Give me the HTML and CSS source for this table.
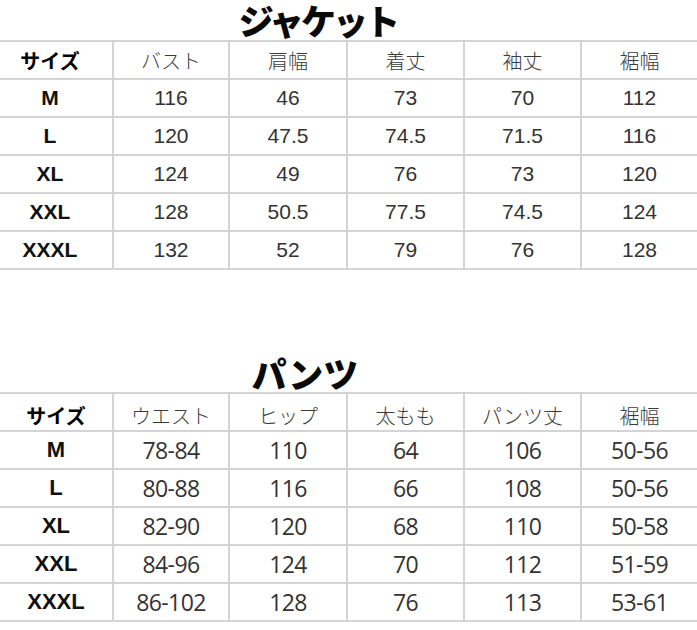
FILE: index.html
```html
<!DOCTYPE html>
<html lang="ja">
<head>
<meta charset="utf-8">
<link rel="stylesheet" href="styles.css">
</head>
<body>
<section class="sheet sheet-jacket">
  <h1 class="title title-jacket">ジャケット</h1>
  <div class="grid">
    <div class="row head"><div class="c size">サイズ</div><div class="c">バスト</div><div class="c">肩幅</div><div class="c">着丈</div><div class="c">袖丈</div><div class="c">裾幅</div></div>
    <div class="row"><div class="c size">M</div><div class="c">116</div><div class="c">46</div><div class="c">73</div><div class="c">70</div><div class="c">112</div></div>
    <div class="row"><div class="c size">L</div><div class="c">120</div><div class="c">47.5</div><div class="c">74.5</div><div class="c">71.5</div><div class="c">116</div></div>
    <div class="row"><div class="c size">XL</div><div class="c">124</div><div class="c">49</div><div class="c">76</div><div class="c">73</div><div class="c">120</div></div>
    <div class="row"><div class="c size">XXL</div><div class="c">128</div><div class="c">50.5</div><div class="c">77.5</div><div class="c">74.5</div><div class="c">124</div></div>
    <div class="row"><div class="c size">XXXL</div><div class="c">132</div><div class="c">52</div><div class="c">79</div><div class="c">76</div><div class="c">128</div></div>
  </div>
</section>
<section class="sheet sheet-pants">
  <h1 class="title title-pants">パンツ</h1>
  <div class="grid">
    <div class="row head"><div class="c size">サイズ</div><div class="c">ウエスト</div><div class="c">ヒップ</div><div class="c">太もも</div><div class="c">パンツ丈</div><div class="c">裾幅</div></div>
    <div class="row"><div class="c size">M</div><div class="c">78-84</div><div class="c">110</div><div class="c">64</div><div class="c">106</div><div class="c">50-56</div></div>
    <div class="row"><div class="c size">L</div><div class="c">80-88</div><div class="c">116</div><div class="c">66</div><div class="c">108</div><div class="c">50-56</div></div>
    <div class="row"><div class="c size">XL</div><div class="c">82-90</div><div class="c">120</div><div class="c">68</div><div class="c">110</div><div class="c">50-58</div></div>
    <div class="row"><div class="c size">XXL</div><div class="c">84-96</div><div class="c">124</div><div class="c">70</div><div class="c">112</div><div class="c">51-59</div></div>
    <div class="row"><div class="c size">XXXL</div><div class="c">86-102</div><div class="c">128</div><div class="c">76</div><div class="c">113</div><div class="c">53-61</div></div>
  </div>
</section>
</body>
</html>
```

FILE: styles.css
```css
html, body {
  margin: 0;
  padding: 0;
  background: #ffffff;
}
body {
  width: 697px;
  overflow: hidden;
  font-family: "Liberation Sans", "Noto Sans CJK JP", sans-serif;
}
.sheet-pants {
  margin-top: 82px;
}
.title {
  margin: 0;
  height: 40px;
  display: flex;
  align-items: center;
  justify-content: center;
  font-family: "Noto Sans CJK JP", sans-serif;
  font-weight: 900;
  font-size: 35px;
  line-height: 40px;
  color: #0a0a0a;
}
.title-jacket {
  padding-right: 61px;
  letter-spacing: -3px;
}
.title-pants {
  padding-right: 87px;
  letter-spacing: 0;
  position: relative;
  top: 1px;
}
.grid {
  border-top: 2px solid #d4d4d4;
}
.row {
  display: grid;
  grid-template-columns: 114px 116px 118px 117px 117px 1fr;
  height: 38px;
  box-sizing: border-box;
  border-bottom: 2px solid #d4d4d4;
}
.c {
  display: flex;
  align-items: center;
  justify-content: center;
  box-sizing: border-box;
  border-right: 2px solid #d4d4d4;
  color: #333333;
  white-space: nowrap;
}
.c:last-child {
  border-right: none;
}
.sheet-jacket .c {
  font-family: "Liberation Sans", sans-serif;
  font-size: 21px;
}
.sheet-pants .c {
  font-family: "Open Sans", sans-serif;
  font-size: 23px;
  letter-spacing: -0.6px;
}
.sheet .head .c {
  font-family: "Noto Sans CJK JP", sans-serif;
  font-weight: 300;
  font-size: 20px;
  letter-spacing: 0;
  color: #3a3a3a;
}
.sheet-pants .head .c {
  padding-top: 6px;
}
.sheet .c.size {
  color: #111111;
  font-weight: 700;
}
.sheet-jacket .c.size {
  padding-right: 12px;
  font-size: 21px;
}
.sheet-pants .c.size {
  font-family: "Liberation Sans", sans-serif;
  font-size: 22px;
  letter-spacing: 0;
}
.sheet .head .c.size {
  font-family: "Noto Sans CJK JP", sans-serif;
  font-weight: 700;
  font-size: 20px;
  color: #000000;
}
```
